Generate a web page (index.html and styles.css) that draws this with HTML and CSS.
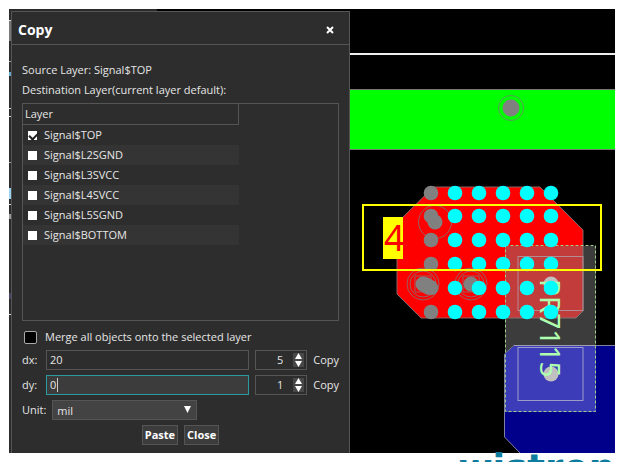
FILE: index.html
```html
<!DOCTYPE html>
<html lang="en">
<head>
    <meta charset="UTF-8">
    <meta name="viewport" content="width=device-width, initial-scale=1.0">
    <title>Copy</title>
    <link rel="stylesheet" href="styles.css">
</head>
<body>
<main class="screen">
    <form class="dialog">
        <header class="title-bar">
            <h1>Copy</h1>
            <button type="button" class="close-x" aria-label="Close dialog">
                <svg width="8" height="8" viewBox="0 0 8 8"><path d="M1 1L7 7M7 1L1 7" stroke="#fff" stroke-width="2"/></svg>
            </button>
        </header>

        <div class="content">
            <p>Source Layer: Signal$TOP</p>
            <p>Destination Layer(current layer default):</p>

            <div class="layer-box">
                <table class="layers">
                    <thead>
                        <tr><th>Layer</th></tr>
                    </thead>
                    <tbody>
                        <tr><td><label><input type="checkbox" checked>Signal$TOP</label></td></tr>
                        <tr><td><label><input type="checkbox">Signal$L2SGND</label></td></tr>
                        <tr><td><label><input type="checkbox">Signal$L3SVCC</label></td></tr>
                        <tr><td><label><input type="checkbox">Signal$L4SVCC</label></td></tr>
                        <tr><td><label><input type="checkbox">Signal$L5SGND</label></td></tr>
                        <tr><td><label><input type="checkbox">Signal$BOTTOM</label></td></tr>
                    </tbody>
                </table>
            </div>

            <label class="merge"><input type="checkbox">Merge all objects onto the selected layer</label>

            <div class="row">
                <label for="dx" class="name">dx:</label>
                <div class="field"><input type="text" id="dx" value="20"></div>
                <div class="spinner">
                    <input type="text" id="nx" value="5">
                    <svg width="11" height="14" viewBox="0 0 11 14"><path d="M5.500 0L9 6H2ZM5.500 14L9 8H2Z" fill="#fff"/></svg>
                </div>
                <label for="nx">Copy</label>
            </div>
            <div class="row">
                <label for="dy" class="name">dy:</label>
                <div class="field active"><input type="text" id="dy" value="0"><i class="caret"></i></div>
                <div class="spinner">
                    <input type="text" id="ny" value="1">
                    <svg width="11" height="14" viewBox="0 0 11 14"><path d="M5.500 0L9 6H2ZM5.500 14L9 8H2Z" fill="#fff"/></svg>
                </div>
                <label for="ny">Copy</label>
            </div>
            <div class="row">
                <label for="unit">Unit:</label>
                <div class="select">
                    <select id="unit">
                        <option>mil</option>
                        <option>mm</option>
                    </select>
                    <svg width="7" height="7" viewBox="0 0 7 7"><path d="M0 0H7L3.500 7Z" fill="#fff"/></svg>
                </div>
            </div>

            <div class="buttons">
                <button type="button">Paste</button>
                <button type="button">Close</button>
            </div>
        </div>
    </form>

    <svg class="board" viewBox="350 11 265 442" preserveAspectRatio="xMinYMin slice">
        <defs>
            <g id="via">
                <circle r="16"/>
                <circle r="13"/>
                <rect x="-8" y="-8" width="16" height="16"/>
            </g>
            <g id="pad-col">
                <circle cy="193" r="7.300"/>
                <circle cy="216" r="7.300"/>
                <circle cy="240" r="7.300"/>
                <circle cy="264" r="7.300"/>
                <circle cy="288" r="7.300"/>
                <circle cy="312" r="7.300"/>
            </g>
        </defs>

        <rect x="340" y="53" width="400" height="2" fill="#eee"/>

        <!-- green trace -->
        <rect x="340" y="89.5" width="400" height="60" fill="#0f0" stroke="#777"/>
        <circle cx="511" cy="108" r="8.5" fill="#808080"/>
        <circle cx="511" cy="108" r="12.5" fill="none" stroke="#5a9a5a"/>

        <!-- top and bottom shapes -->
        <path d="M433.5 187H540L583 230V311L576 318H421L397 294V223Z" fill="#f00" stroke="#8c6464"/>
        <path d="M740 345.5H514L504.5 354V437L521 454H740Z" fill="#00008b"/>
        <path d="M740 345.5H514L504.5 354V437L521 454" fill="none" stroke="#8080a0"/>

        <g fill="none" stroke="#986060">
            <circle cx="435" cy="222" r="16.5"/>
            <use href="#via" x="423" y="284"/>
            <use href="#via" x="471" y="284"/>
        </g>

        <!-- component -->
        <rect x="505" y="246" width="91" height="166" fill="#808080" fill-opacity=".47"/>
        <path d="M514 346H596V412H505V354Z" fill="#3c3cb8"/>
        <path d="M514 345.5H596" stroke="#a0a0b4"/>
        <rect x="505.500" y="245.500" width="90" height="166" fill="none" stroke="#9ccf8c" stroke-dasharray="3 2"/>
        <rect x="518" y="256.500" width="65" height="54" fill="none" stroke="#b08c94"/>
        <rect x="518" y="347.500" width="65" height="53" fill="none" stroke="#9c9cc8"/>
        <circle cx="551" cy="284" r="7.500" fill="#c0c0c0"/>
        <circle cx="551" cy="374" r="7.500" fill="#c0c0c0"/>
        <text class="refdes" transform="translate(540 279) rotate(90)">PR7115</text>

        <!-- copied pads -->
        <g fill="#808080">
            <use href="#pad-col" x="431"/>
            <circle cx="435" cy="222" r="7.500"/>
            <circle cx="423" cy="284" r="7.500"/>
            <circle cx="471" cy="284" r="7.500"/>
            <path d="M419 290L427 295L436 282L427 277Z"/>
        </g>
        <g fill="#0ff">
            <use href="#pad-col" x="455"/>
            <use href="#pad-col" x="479"/>
            <use href="#pad-col" x="503"/>
            <use href="#pad-col" x="527"/>
            <use href="#pad-col" x="551"/>
        </g>

        <rect x="363" y="205" width="238" height="65" fill="none" stroke="#ff0" stroke-width="2"/>
        <rect x="383" y="217" width="20" height="42" fill="#ff0"/>
        <text class="pin" x="384" y="251">4</text>
    </svg>
</main>
<footer class="brand">wistron</footer>
</body>
</html>
```

FILE: styles.css
```css
:root {
    --panel: #2d2d2d;
    --line: #555;
    --text: #e6e6e6;
}

* {
    box-sizing: border-box;
}

body {
    margin: 0;
    padding: 9px 9px 0;
    height: 100vh;
    overflow: hidden;
    background: #fff;
    color: var(--text);
    font: 11px/20px 'Open Sans', 'Noto Sans', sans-serif;
}

input, select, button {
    font: inherit;
    color: inherit;
}

.screen {
    display: flex;
    padding: 2px 0 0 2px;
    /* slivers of the main window behind the dialog */
    background:
        linear-gradient(#2b2b2b, #2b2b2b) 0 0 / 148px 2px no-repeat,
        linear-gradient(#2b2b2b 11px, #ddd 11px 12px, #777 12px 32px, #2b2b2b 32px 52px,
            #aaa 52px 53px, #2b2b2b 53px 63px, #6ac 63px 67px, #2b2b2b 67px 99px,
            #ddd 99px 100px, #2b2b2b 100px 107px, #ddd 107px 108px, #2b2b2b 108px 153px,
            #aaa 153px 154px, #2b2b2b 154px 179px, #9cd4f0 179px 190px, #2b2b2b 190px 195px,
            #ddd 195px 196px, #2b2b2b 196px 205px, #999 205px 210px, #2b2b2b 210px 284px,
            #446 284px 290px, #2b2b2b 290px 305px, #ddd 305px 306px, #2b2b2b 306px) 0 0 / 2px 100% no-repeat,
        #000;
}

.dialog {
    flex: none;
    width: 339px;
    background: var(--panel);
    border: 1px solid var(--line);
    border-bottom: none;
}

.title-bar {
    display: flex;
    align-items: center;
    justify-content: space-between;
    height: 33px;
    padding: 4px 15px 0 6px;
    border-bottom: 1px solid var(--line);
}

.title-bar h1 {
    margin: 0;
    font-size: 14px;
    color: #fff;
}

.close-x {
    display: flex;
    padding: 0;
    border: none;
    background: none;
}

.content {
    padding: 15px 10px 8px;
}

.content p {
    margin: 0;
}

.layer-box {
    height: 218px;
    margin: 3px 0 1px;
    border: 1px solid var(--line);
}

.layers {
    width: 216px;
    border-collapse: collapse;
}

.layers th {
    height: 20px;
    padding: 0 2px;
    font-weight: normal;
    text-align: left;
    border-right: 1px solid var(--line);
    border-bottom: 1px solid var(--line);
}

.layers td {
    height: 20px;
    padding: 0 5px;
}

.layers tbody tr:nth-child(even) {
    background: #343434;
}

.layers label {
    display: flex;
    align-items: center;
    gap: 7px;
}

input[type="checkbox"] {
    appearance: none;
    position: relative;
    width: 9px;
    height: 9px;
    margin: 0;
    background: #fff;
}

.layers input:checked::after {
    content: "";
    position: absolute;
    left: 3px;
    top: -1px;
    width: 4px;
    height: 8px;
    border: solid #222;
    border-width: 0 2px 2px 0;
    transform: rotate(45deg);
}

.merge {
    display: flex;
    align-items: center;
    gap: 8px;
    padding: 5px 2px 3px;
}

.merge input[type="checkbox"] {
    width: 13px;
    height: 13px;
    background: #000;
    border: 1px solid #aaa;
    border-radius: 2px;
}

.row {
    display: flex;
    align-items: center;
    gap: 6px;
    margin-bottom: 5px;
}

.name {
    width: 18px;
}

.field {
    position: relative;
    flex: 1;
    display: flex;
    border: 1px solid var(--line);
}

.field input {
    width: 100%;
    height: 18px;
    padding: 0 3px;
    border: none;
    outline: none;
    background: none;
}

.active {
    background: #3c3c3c;
    border-color: #2a9a9e;
}

.caret {
    position: absolute;
    left: 10px;
    top: 2px;
    width: 1px;
    height: 14px;
    background: #ccc;
}

.spinner {
    display: flex;
    align-items: center;
    gap: 10px;
    width: 52px;
    height: 20px;
    padding-right: 2px;
    border: 1px solid var(--line);
}

.spinner input {
    flex: 1;
    min-width: 0;
    height: 18px;
    padding: 0;
    border: none;
    background: none;
    text-align: right;
}

.spinner svg {
    background: #484848;
}

.select {
    position: relative;
    width: 145px;
}

.select select {
    display: block;
    appearance: none;
    width: 100%;
    height: 20px;
    padding: 0 4px;
    background: #434343;
    border: 1px solid var(--line);
    border-radius: 0;
}

.select svg {
    position: absolute;
    right: 6px;
    top: 6px;
}

.buttons {
    display: flex;
    justify-content: center;
    gap: 6px;
}

.buttons button {
    height: 20px;
    padding: 0 2px;
    background: #3c3c3c;
    border: 1px solid var(--line);
    font-weight: bold;
    line-height: 18px;
    color: #fff;
}

.board {
    flex: 1;
    min-width: 0;
    background: #000;
}

.refdes {
    font: 28px 'Noto Sans', sans-serif;
    fill: #afffaf;
}

.pin {
    font: 36px 'Noto Sans', sans-serif;
    fill: #f00;
}

.brand {
    font: bold 37px/32px 'DejaVu Sans', sans-serif;
    text-align: right;
    color: #0e7c9e;
}
```
